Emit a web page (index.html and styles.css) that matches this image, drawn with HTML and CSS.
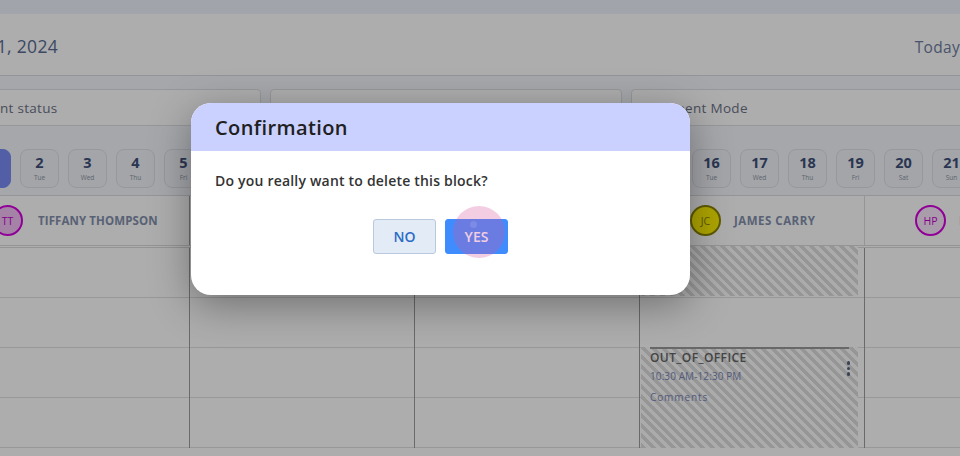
FILE: index.html
```html
<!DOCTYPE html>
<html lang="en">
<head>
<meta charset="utf-8">
<title>Calendar - Confirmation</title>
<link rel="stylesheet" href="styles.css">
</head>
<body>
<div class="app">
  <div class="topbar"></div>
  <div class="titlebar">
    <div class="title-wrap"><h1 class="title">January 1, 2024</h1></div>
    <span class="today">Today</span>
  </div>
  <div class="controls">
    <div class="filters">
      <div class="filter first">Payment status</div>
      <div class="filter">Select Location</div>
      <div class="filter">Payment Mode</div>
    </div>
    <div class="dates">
      <div class="day active"><b>1</b><span>Mon</span></div>
      <div class="day"><b>2</b><span>Tue</span></div>
      <div class="day"><b>3</b><span>Wed</span></div>
      <div class="day"><b>4</b><span>Thu</span></div>
      <div class="day"><b>5</b><span>Fri</span></div>
      <div class="day"><b>6</b><span>Sat</span></div>
      <div class="day"><b>7</b><span>Sun</span></div>
      <div class="day"><b>8</b><span>Mon</span></div>
      <div class="day"><b>9</b><span>Tue</span></div>
      <div class="day"><b>10</b><span>Wed</span></div>
      <div class="day"><b>11</b><span>Thu</span></div>
      <div class="day"><b>12</b><span>Fri</span></div>
      <div class="day"><b>13</b><span>Sat</span></div>
      <div class="day"><b>14</b><span>Sun</span></div>
      <div class="day"><b>15</b><span>Mon</span></div>
      <div class="day"><b>16</b><span>Tue</span></div>
      <div class="day"><b>17</b><span>Wed</span></div>
      <div class="day"><b>18</b><span>Thu</span></div>
      <div class="day"><b>19</b><span>Fri</span></div>
      <div class="day"><b>20</b><span>Sat</span></div>
      <div class="day"><b>21</b><span>Sun</span></div>
    </div>
  </div>
  <div class="board">
    <div class="head">
      <div class="hcell first"><span class="avatar tt">TT</span><span class="name">TIFFANY THOMPSON</span></div>
      <div class="hcell"><span class="avatar dr">DR</span><span class="name">DANIEL ROSS</span></div>
      <div class="hcell"><span class="avatar mk">MK</span><span class="name">MARIA KING</span></div>
      <div class="hcell"><span class="avatar jc">JC</span><span class="name">JAMES CARRY</span></div>
      <div class="hcell"><span class="avatar hp">HP</span><span class="name">HELEN PARK</span></div>
    </div>
    <div class="body">
      <div class="col"><div class="cell"></div><div class="cell"></div><div class="cell"></div><div class="cell"></div></div>
      <div class="col"><div class="cell"></div><div class="cell"></div><div class="cell"></div><div class="cell"></div></div>
      <div class="col"><div class="cell"></div><div class="cell"></div><div class="cell"></div><div class="cell"></div></div>
      <div class="col">
        <div class="cell"></div><div class="cell"></div><div class="cell"></div><div class="cell"></div>
        <div class="block b1"></div>
        <div class="block b2">
          <div class="block-in">
            <div class="btitle">OUT_OF_OFFICE</div>
            <div class="btime">10:30 AM-12:30 PM</div>
            <div class="bcomm">Comments</div>
            <span class="kebab"><i></i><i></i><i></i></span>
          </div>
        </div>
      </div>
      <div class="col"><div class="cell"></div><div class="cell"></div><div class="cell"></div><div class="cell"></div></div>
    </div>
  </div>
</div>
<div class="backdrop"></div>
<div class="modal">
  <div class="modal-head">Confirmation</div>
  <div class="modal-body">
    <p class="msg">Do you really want to delete this block?</p>
    <div class="actions">
      <button class="btn no">NO</button>
      <button class="btn yes">YES</button>
    </div>
  </div>
</div>
<div class="ripple"><span class="dot"></span></div>
</body>
</html>
```
FILE: styles.css
```css
* { box-sizing: border-box; }
html, body { margin: 0; padding: 0; }
body {
  width: 960px;
  height: 456px;
  overflow: hidden;
  background: #ffffff;
  font-family: "Open Sans", "Liberation Sans", sans-serif;
  position: relative;
}
.app { width: 960px; overflow: hidden; }
.topbar { height: 14px; background: #eef3fc; }
.titlebar {
  height: 62px;
  display: flex;
  align-items: center;
  border-bottom: 1px solid #d9dbe0;
  white-space: nowrap;
  padding-top: 2px;
}
.title-wrap { width: 58px; display: flex; justify-content: flex-end; flex: none; }
.title { margin: 0; font-size: 17.5px; font-weight: 500; color: #596b94; white-space: nowrap; flex: none; letter-spacing: 0.3px; }
.today { margin-left: auto; margin-right: 0; font-size: 15.5px; font-weight: 500; color: #6e7d9f; flex: none; padding-top: 2px; letter-spacing: 0.3px; }

.controls {
  background: #f3f6fd;
  padding-top: 13px;
  padding-bottom: 7px;
  border-bottom: 1px solid #d9dce2;
}
.filters { display: flex; gap: 9px; margin-left: -56px; }
.filter {
  flex: none;
  width: 352px;
  height: 37px;
  background: #ffffff;
  border: 1px solid #dcdfe4;
  border-radius: 4px;
  padding-left: 17px;
  display: flex;
  align-items: center;
  font-size: 13.5px;
  color: #6c7288;
  white-space: nowrap;
  letter-spacing: 0.3px;
}
.filter.first { width: 317px; padding-left: 11px; }
.dates { display: flex; gap: 9px; margin-left: -28px; margin-top: 23px; }
.day {
  flex: none;
  width: 39px;
  height: 39px;
  border: 1px solid #dde1e8;
  border-radius: 8px;
  background: #f1f4fa;
  display: flex;
  flex-direction: column;
  align-items: center;
  padding-top: 4px;
}
.day b { font-size: 14.5px; font-weight: 700; color: #3f5078; line-height: 18px; }
.day span { font-size: 6.5px; color: #8d93a3; line-height: 10px; margin-top: 1px; }
.day.active { background: #7a8cf6; border-color: #7a8cf6; }
.day.active b, .day.active span { color: #ffffff; }

.board { margin-left: -36px; }
.head {
  display: grid;
  grid-template-columns: repeat(5, 225px);
  height: 52px;
  border-bottom: 3px double #dadada;
}
.hcell {
  display: flex;
  align-items: center;
  padding-left: 50px;
  border-left: 1px solid #dcdcdc;
  white-space: nowrap;
  overflow: hidden;
}
.hcell.first { padding-left: 28px; border-left: none; }
.hcell:nth-child(2) { border-left-color: #a0a0a0; }
.avatar {
  flex: none;
  width: 31px;
  height: 31px;
  border-radius: 50%;
  border: 2px solid #d500de;
  display: flex;
  align-items: center;
  justify-content: center;
  font-size: 10.5px;
  color: #c400cc;
  margin-right: 13px;
}
.hcell.first .avatar { margin-right: 15px; }
.avatar.tt { background: #f3c2f6; }
.avatar.jc { background: #fff200; border-color: #8a8500; color: #8a8400; }
.avatar.hp { background: #fbe8fc; }
.avatar.dr { background: #cfe3ff; border-color: #3f7ee8; color: #3f7ee8; }
.avatar.mk { background: #d6f5dc; border-color: #2ea84a; color: #2ea84a; }
.name { font-size: 11.5px; font-weight: 700; color: #8390ad; letter-spacing: 0.1px; }
.hcell:nth-child(4) .name { letter-spacing: 0.5px; }

.body { display: grid; grid-template-columns: repeat(5, 225px); }
.col { position: relative; border-left: 1px solid #9c9c9c; }
.col:first-child { border-left: none; }
.cell { height: 50px; border-bottom: 1px solid #e1e1e1; }

.block {
  position: absolute;
  left: 1px;
  width: 217px;
  background: repeating-linear-gradient(45deg, #dedede 0 3.5px, #fcfcfc 3.5px 7px);
}
.b1 { top: -2px; height: 50px; }
.b2 { top: 99px; height: 160px; }
.block-in {
  position: relative;
  margin: 0 9px;
  border-top: 2px solid #9a9a9a;
  padding-top: 1px;
}
.btitle { font-size: 12px; font-weight: 600; color: #646464; line-height: 15px; letter-spacing: 0.4px; }
.btime { font-size: 10px; color: #7a87b8; margin-top: 5px; line-height: 13px; letter-spacing: 0.1px; }
.bcomm { font-size: 10px; color: #7a87b8; margin-top: 8px; line-height: 13px; letter-spacing: 0.9px; }
.kebab {
  position: absolute;
  right: -1px;
  top: 12px;
  display: flex;
  flex-direction: column;
  gap: 2px;
}
.kebab i { display: block; width: 3.5px; height: 3.5px; border-radius: 50%; background: #55627f; }

.backdrop { position: absolute; inset: 0; background: rgba(0, 0, 0, 0.32); }

.modal {
  position: absolute;
  left: 191px;
  top: 103px;
  width: 499px;
  height: 192px;
  background: #ffffff;
  border-radius: 20px;
  overflow: hidden;
  box-shadow: 0 10px 40px rgba(0, 0, 0, 0.35);
}
.modal-head {
  height: 48px;
  background: #cbd1ff;
  padding-left: 24px;
  display: flex;
  align-items: center;
  font-size: 20px;
  font-weight: 600;
  color: #202020;
  padding-top: 1px;
  letter-spacing: 0.4px;
}
.modal-body { padding: 20px 24px 0; }
.msg { margin: 0; font-size: 14px; font-weight: 600; color: #333333; line-height: 20px; letter-spacing: 0.2px; }
.actions { display: flex; justify-content: center; gap: 9px; margin-top: 28px; }
.btn {
  width: 63px;
  height: 35px;
  border-radius: 3px;
  font-family: "Open Sans", "Liberation Sans", sans-serif;
  font-size: 14px;
  font-weight: 600;
  cursor: pointer;
  padding: 0;
}
.btn.no { background: #e2ebf6; border: 1px solid #b9c9dd; color: #2b6cc6; }
.btn.yes { background: #3f8cff; border: 1px solid #3f8cff; color: #ffffff; }

.ripple {
  position: absolute;
  left: 453px;
  top: 206px;
  width: 52px;
  height: 52px;
  border-radius: 50%;
  background: rgba(212, 84, 150, 0.29);
}
.ripple .dot {
  position: absolute;
  left: 17px;
  top: 15px;
  width: 7px;
  height: 7px;
  border-radius: 50%;
  background: rgba(255, 255, 255, 0.12);
}
```
